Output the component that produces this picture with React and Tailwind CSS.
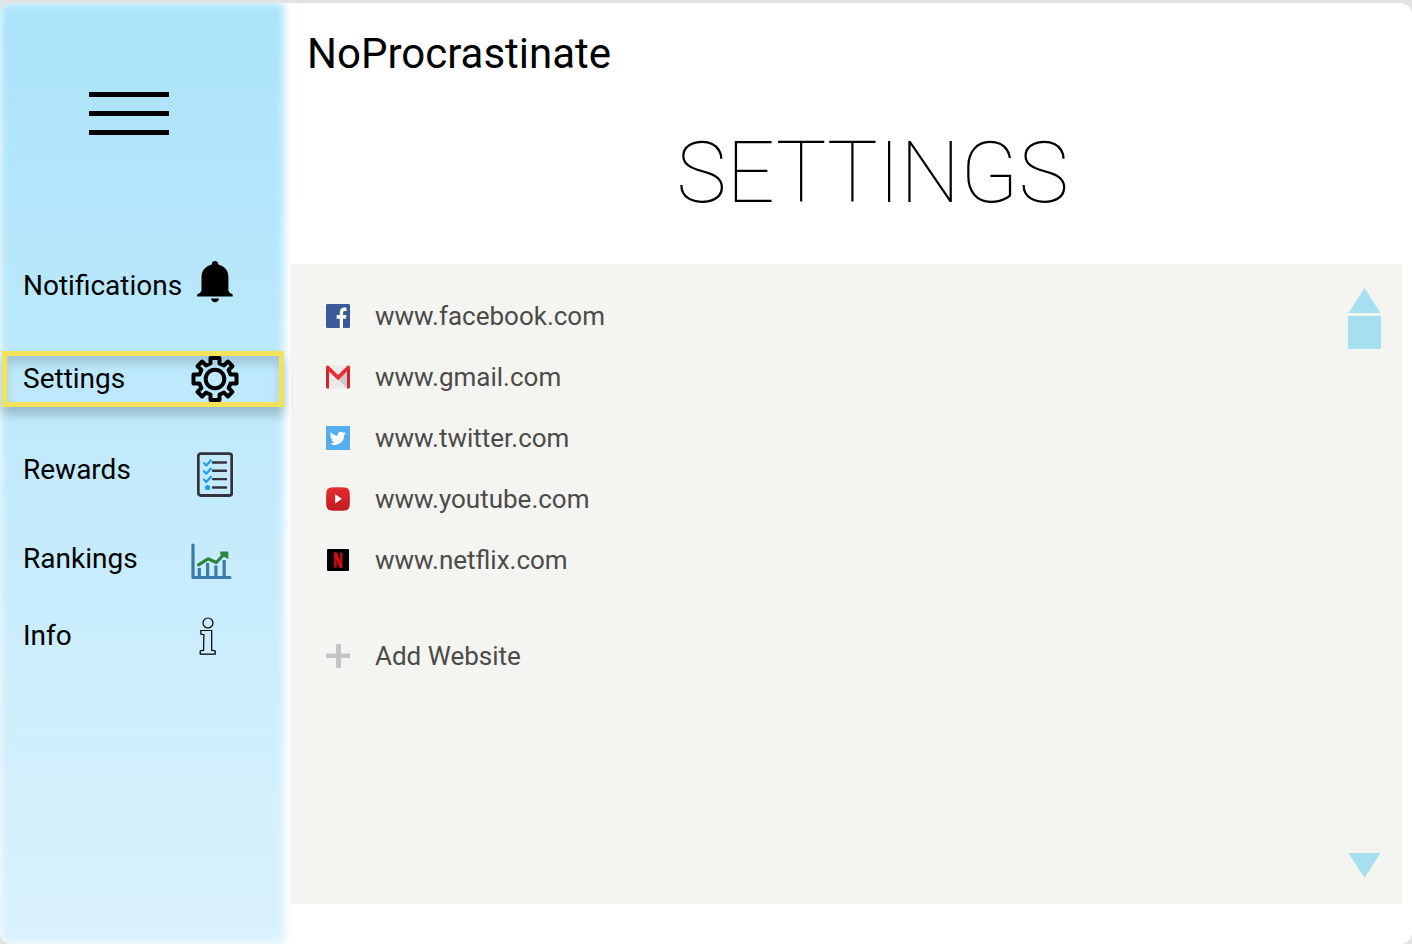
import React from "react";

function BellIcon() {
  return (
    <svg viewBox="0 0 36 42" className="h-[42px] w-9" aria-hidden="true">
      <path
        d="M18 0a3.2 3.2 0 0 1 3.2 3.6C27.6 5 31.4 9.8 31.4 16v12.5c0 2 .8 3.2 4.3 5v2H.2v-2c3.500-1.800 4.300-3 4.300-5V16C4.500 9.800 8.400 5 14.800 3.600A3.200 3.200 0 0 1 18 0z"
        fill="#000"
      />
      <path d="M14 37.500h8c-.3 2.400-1.900 3.800-4 3.800s-3.700-1.400-4-3.800z" fill="#000" />
    </svg>
  );
}

function GearIcon() {
  return (
    <svg viewBox="0 0 48 48" className="size-12" fill="none" stroke="#000" strokeWidth="4" strokeLinejoin="round" aria-hidden="true">
      <path d="M19.500 3h9v5.500l4.500 1.900 3.900-3.900 4.600 4.600-3.900 3.900 1.900 4.500H45.500v9h-6l-1.900 4.500 3.900 3.900-4.600 4.600-3.900-3.900-4.500 1.900V45h-9v-5.500L15 37.600l-3.900 3.900-4.600-4.600 3.900-3.900-1.900-4.500H2.500v-9h6l1.900-4.500-3.900-3.900 4.600-4.600 3.900 3.900 4.500-1.900z" />
      <circle cx="24" cy="24" r="9.300" />
    </svg>
  );
}

function ChecklistIcon() {
  return (
    <svg viewBox="0 0 36 45" className="h-[45px] w-9" fill="none" aria-hidden="true">
      <rect x="1.300" y="1.700" width="33.400" height="41.800" rx="2.500" stroke="#35343b" strokeWidth="2.800" />
      <path d="M16 10.500h13M16 18.800h13M16 27.100h13M16 35.500h13" stroke="#35343b" strokeWidth="2.400" strokeLinecap="round" />
      <path d="M6.500 10.500l2.800 2.900 5.200-5.700M6.500 18.800l2.800 2.900 5.200-5.700M6.500 27.100l2.800 2.900 5.200-5.700" stroke="#1b9df0" strokeWidth="2.100" />
      <circle cx="10.600" cy="35.500" r="2.600" fill="#1b9df0" />
    </svg>
  );
}

function ChartIcon() {
  return (
    <svg viewBox="0 0 41 37" className="h-[37px] w-[41px]" fill="none" aria-hidden="true">
      <path d="M2 2v32.500h37" stroke="#3a7aac" strokeWidth="3.200" strokeLinecap="round" strokeLinejoin="round" />
      <path d="M8.300 25v9M16.600 20v14M24.900 22.500V34M33.200 17v17" stroke="#3a7aac" strokeWidth="3.200" />
      <path d="M7.500 21.800L17 15.800l8.300 3.700 8-8.500" stroke="#2e8540" strokeWidth="3.200" strokeLinecap="round" strokeLinejoin="round" />
      <path d="M29.500 8.500h7.800v7.500l-3-1.500-5.500-3.800z" fill="#2e8540" />
    </svg>
  );
}

function InfoIcon() {
  return (
    <svg viewBox="0 0 18 38" className="h-[38px] w-[18px]" fill="none" stroke="#000" strokeWidth="1.200" aria-hidden="true">
      <circle cx="9" cy="6" r="5" />
      <path d="M1.800 13.500h10.900v19.700l3.500.7v3.200H1.200v-3.200l3.400-.7.3-15.500-3.100-.7z" />
    </svg>
  );
}

function FacebookIcon() {
  return (
    <svg viewBox="0 0 24 24" className="size-6" aria-hidden="true">
      <rect width="24" height="24" rx="1.200" fill="#3d5a98" />
      <path d="M13.800 24v-9.300h-3.200V11h3.200V8.300c0-3 1.900-4.700 4.700-4.700.9 0 1.700 0 2 .1v3.400h-1.700c-1.300 0-1.800.6-1.800 1.800V11h3.500l-.5 3.700h-3V24z" fill="#fff" />
    </svg>
  );
}

function GmailIcon() {
  return (
    <svg viewBox="0 0 24 24" className="size-6" aria-hidden="true">
      <path d="M1 .5h22v23H1z" fill="#eaeaea" />
      <path d="M12 14.500L22 5v18.500z" fill="#c9cacc" />
      <path d="M12 14.500l9.500 9H23V7z" fill="#c9cacc" />
      <path d="M0 2.200L3 4v19.500H1.500A1.500 1.500 0 0 1 0 22zM24 2.200L21 4v19.500h1.500A1.500 1.500 0 0 0 24 22z" fill="#d3222a" />
      <path d="M0 2.300C0 .6 1.700 0 2.800 1L12 10l9.200-9C22.300 0 24 .6 24 2.300c0 .8-.4 1.500-.9 2L12 15.200.9 4.300C.4 3.800 0 3.100 0 2.300z" fill="#ee2a30" />
    </svg>
  );
}

function TwitterIcon() {
  return (
    <svg viewBox="0 0 24 24" className="size-6" aria-hidden="true">
      <rect width="24" height="24" fill="#55acee" />
      <g transform="translate(4 4) scale(.67)">
        <path
          d="M23.600 4.900c-.9.400-1.800.7-2.800.8 1-.6 1.800-1.600 2.200-2.700-1 .6-2 1-3.100 1.200a4.900 4.900 0 0 0-8.400 4.500C7.400 8.500 3.800 6.500 1.400 3.500a4.900 4.900 0 0 0 1.500 6.600c-.8 0-1.600-.2-2.200-.6v.1c0 2.400 1.700 4.400 3.900 4.800-.7.200-1.500.2-2.200.1.600 2 2.400 3.400 4.600 3.400A9.900 9.900 0 0 1-.3 19.900 13.900 13.900 0 0 0 21.100 7.500c1-.7 1.800-1.600 2.500-2.600z"
          fill="#fff"
        />
      </g>
    </svg>
  );
}

function YoutubeIcon() {
  return (
    <svg viewBox="0 0 24 24" className="size-6" aria-hidden="true">
      <defs>
        <linearGradient id="yt" x1="0" y1="0" x2="0" y2="1">
          <stop offset="0" stopColor="#e52d2f" />
          <stop offset="1" stopColor="#bf1a22" />
        </linearGradient>
      </defs>
      <path d="M5 .5Q12-.2 19 .5q4.200.3 4.600 4.500.6 7 0 14-.4 4.200-4.600 4.500-7 .7-14 0Q.8 23.200.4 19q-.6-7 0-14Q.8.800 5 .5z" fill="url(#yt)" />
      <path d="M9.200 7.200v9.200l6.600-4.600z" fill="#fff" />
    </svg>
  );
}

function NetflixIcon() {
  return (
    <svg viewBox="0 0 24 24" className="size-6" aria-hidden="true">
      <rect x="1" y="1" width="22" height="22" rx="1" fill="#000" />
      <path d="M7.800 4.500h3v15l-3 .3zM13.600 4.500h2.900v15.300l-2.900-.3z" fill="#a9101a" />
      <path d="M7.800 4.500h3l5.700 15.300-3-.3z" fill="#e50914" />
    </svg>
  );
}

function PlusIcon() {
  return (
    <svg viewBox="0 0 24 24" className="size-6" aria-hidden="true">
      <path d="M10 0h5v9.500h9v4.500h-9v10h-5V14H0V9.500h10z" fill="#c4c4c4" />
    </svg>
  );
}

const navItems = [
  { label: "Notifications", icon: <BellIcon />, row: "", slot: "justify-center pb-2" },
  { label: "Settings", icon: <GearIcon />, row: "mt-[37px]", slot: "justify-center", active: true },
  { label: "Rewards", icon: <ChecklistIcon />, row: "mt-[35px]", slot: "justify-center pt-2" },
  { label: "Rankings", icon: <ChartIcon />, row: "mt-[33px]", slot: "justify-start pt-1" },
  { label: "Info", icon: <InfoIcon />, row: "mt-[21px]", slot: "justify-start pl-2" },
];

const sites = [
  { host: "www.facebook.com", icon: <FacebookIcon /> },
  { host: "www.gmail.com", icon: <GmailIcon /> },
  { host: "www.twitter.com", icon: <TwitterIcon /> },
  { host: "www.youtube.com", icon: <YoutubeIcon /> },
  { host: "www.netflix.com", icon: <NetflixIcon /> },
];

function Sidebar() {
  return (
    <aside className="relative isolate w-[284px] shrink-0">
      <div className="absolute inset-0 -z-10 bg-linear-to-b from-[#aae3fb] to-[#daf2fd] blur-xs" />
      <button type="button" aria-label="Menu" className="mt-[89px] ml-[89px] flex w-20 flex-col gap-3.5">
        <span className="h-[5px] w-full bg-black" />
        <span className="h-[5px] w-full bg-black" />
        <span className="h-[5px] w-full bg-black" />
      </button>
      <nav className="mt-[123px] ml-0.5">
        <ul>
          {navItems.map((item) => (
            <li key={item.label} className={item.row}>
              <a
                href="#"
                aria-current={item.active ? "page" : undefined}
                className={
                  "flex h-14 items-center justify-between border-[5px] pr-10 pl-4 text-[28px] leading-8 text-black " +
                  (item.active
                    ? "border-[#f2e35b] shadow-[0_8px_10px_rgba(0,0,0,0.2),inset_0_8px_10px_rgba(0,0,0,0.14)]"
                    : "border-transparent")
                }
              >
                {item.label}
                <span className={"-ml-4 flex w-12 shrink-0 " + item.slot}>{item.icon}</span>
              </a>
            </li>
          ))}
        </ul>
      </nav>
    </aside>
  );
}

function ScrollControls() {
  return (
    <div className="flex w-[33px] flex-col items-center">
      <button type="button" aria-label="Scroll up">
        <svg viewBox="0 0 33 25" className="block h-[25px] w-[33px]" aria-hidden="true">
          <path d="M16.500 0l16 25H.5z" fill="#a6e0f0" />
        </svg>
      </button>
      <button type="button" aria-label="Scroll position" className="mt-[3px] size-[33px] bg-[#a6e0f0]" />
      <button type="button" aria-label="Scroll down" className="mt-auto">
        <svg viewBox="0 0 33 25" className="block h-[25px] w-[33px]" aria-hidden="true">
          <path d="M16.500 25L.5 0h32z" fill="#a6e0f0" />
        </svg>
      </button>
    </div>
  );
}

export default function App() {
  return (
    <div className="flex min-h-screen flex-col bg-[#e3e3e3] pt-[3px] font-['Roboto',sans-serif]">
      <div className="flex grow overflow-clip rounded-xl bg-white">
        <Sidebar />
        <main className="flex grow flex-col pr-2.5 pb-10 pl-[7px]">
          <p className="mt-[25px] ml-4 text-[42px] leading-[52px] text-black">NoProcrastinate</p>
          <h1 className="mt-[37px] ml-[52px] text-center text-[85px] leading-[112px] font-thin text-black">SETTINGS</h1>
          <section className="mt-[35px] flex grow justify-between bg-[#f4f5f0] pt-6 pr-[21px] pb-[26px] pl-[35px] text-[26px] leading-8 text-[#4d4a4a]">
            <div>
              <ul>
                {sites.map((site) => (
                  <li key={site.host} className="flex h-[61px] items-start gap-[25px]">
                    <span className="mt-4 shrink-0">{site.icon}</span>
                    <span className="mt-3">{site.host}</span>
                  </li>
                ))}
              </ul>
              <button type="button" className="mt-[47px] flex items-center gap-[25px]">
                <PlusIcon />
                Add Website
              </button>
            </div>
            <ScrollControls />
          </section>
        </main>
      </div>
    </div>
  );
}
